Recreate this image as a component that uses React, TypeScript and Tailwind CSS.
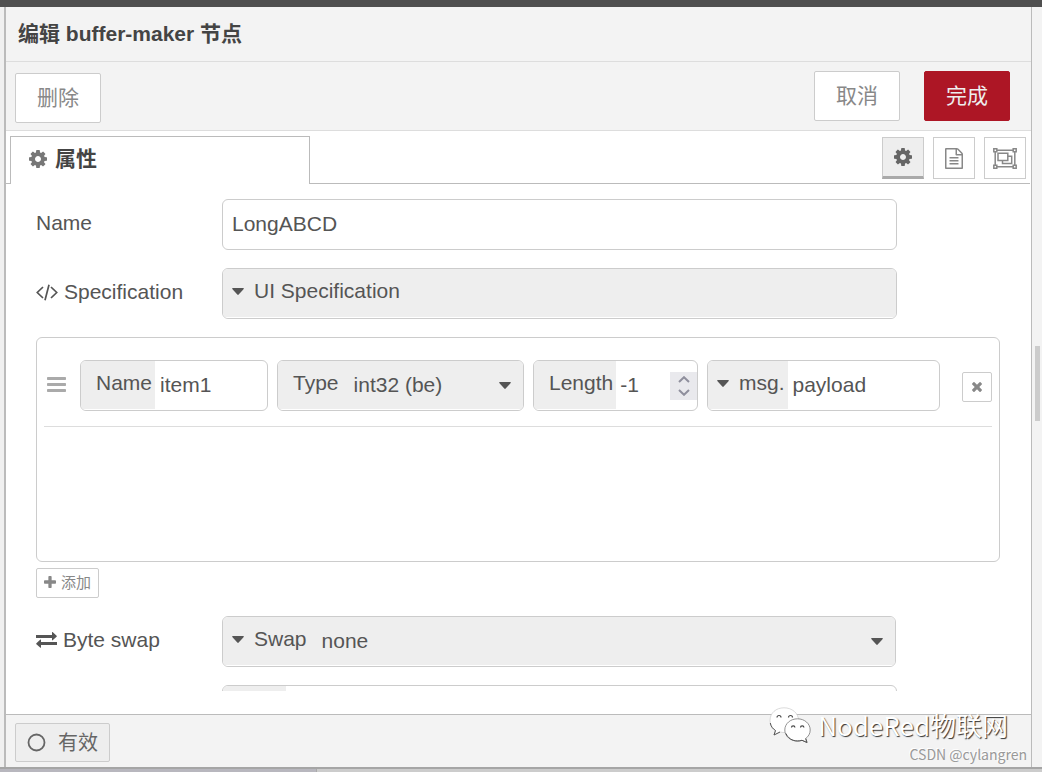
import React, { useState } from 'react';

interface IconProps {
  className?: string;
}

const CogIcon: React.FC<IconProps> = ({ className }) => (
  <svg viewBox="128 128 1536 1536" fill="currentColor" className={className} aria-hidden="true">
    <path d="M1152 896q0-106-75-181t-181-75-181 75-75 181 75 181 181 75 181-75 75-181zm512-109v222q0 12-8 23t-20 13l-185 28q-19 54-39 91 35 50 107 138 10 12 10 25t-9 23q-27 37-99 108t-94 71q-12 0-26-9l-138-108q-44 23-91 38-16 136-29 186-7 28-36 28h-222q-14 0-24.5-8.5t-11.5-21.5l-28-184q-49-16-90-37l-141 107q-10 9-25 9-14 0-25-11-126-114-165-168-7-10-7-23 0-12 8-23 15-21 51-66.5t54-70.5q-27-50-41-99l-183-27q-13-2-21-12.5t-8-23.5v-222q0-12 8-23t19-13l186-28q14-46 39-92-40-57-107-138-10-12-10-24 0-10 9-23 26-36 98.5-107.5t94.5-71.5q13 0 26 10l138 107q44-23 91-38 16-136 29-186 7-28 36-28h222q14 0 24.5 8.5t11.5 21.5l28 184q49 16 90 37l142-107q9-9 24-9 13 0 25 10 129 119 165 170 7 8 7 22 0 12-8 23-15 21-51 66.5t-54 70.5q26 50 41 98l183 28q13 2 21 12.5t8 23.5z" />
  </svg>
);

const FileTextIcon: React.FC<IconProps> = ({ className }) => (
  <svg viewBox="128 0 1536 1792" fill="currentColor" className={className} aria-hidden="true">
    <path d="M1596 380q28 28 48 76t20 88v1152q0 40-28 68t-68 28h-1344q-40 0-68-28t-28-68v-1600q0-40 28-68t68-28h896q40 0 88 20t76 48zm-444-244v376h376q-10-29-22-41l-313-313q-12-12-41-22zm384 1528v-1024h-416q-40 0-68-28t-28-68v-416h-768v1536h1280zm-1024-864q0-14 9-23t23-9h704q14 0 23 9t9 23v64q0 14-9 23t-23 9h-704q-14 0-23-9t-9-23v-64zm736 224q14 0 23 9t9 23v64q0 14-9 23t-23 9h-704q-14 0-23-9t-9-23v-64q0-14 9-23t23-9h704zm0 256q14 0 23 9t9 23v64q0 14-9 23t-23 9h-704q-14 0-23-9t-9-23v-64q0-14 9-23t23-9h704z" />
  </svg>
);

const ObjectGroupIcon: React.FC<IconProps> = ({ className }) => (
  <svg viewBox="0 0 24 21" fill="none" stroke="currentColor" strokeWidth="1.500" className={className} aria-hidden="true">
    <path d="M4 2.200h16M4 18.800h16M2.200 4v13M21.800 4v13" />
    <path d="M.8.8h3v3h-3zM20.200.8h3v3h-3zM.8 17.200h3v3h-3zM20.200 17.200h3v3h-3z" />
    <path d="M5 5.300h9.800v7.200H5zM14.800 8.300h3.900v7.200H9.500v-3" />
  </svg>
);

const PlusIcon: React.FC<IconProps> = ({ className }) => (
  <svg viewBox="192 128 1408 1408" fill="currentColor" className={className} aria-hidden="true">
    <path d="M1600 736v192q0 40-28 68t-68 28h-416v416q0 40-28 68t-68 28h-192q-40 0-68-28t-28-68v-416h-416q-40 0-68-28t-28-68v-192q0-40 28-68t68-28h416v-416q0-40 28-68t68-28h192q40 0 68 28t28 68v416h416q40 0 68 28t28 68z" />
  </svg>
);

const RemoveIcon: React.FC<IconProps> = ({ className }) => (
  <svg viewBox="302 366 1188 1188" fill="currentColor" className={className} aria-hidden="true">
    <path d="M1490 1322q0 40-28 68l-136 136q-28 28-68 28t-68-28l-294-294-294 294q-28 28-68 28t-68-28l-136-136q-28-28-28-68t28-68l294-294-294-294q-28-28-28-68t28-68l136-136q28-28 68-28t68 28l294 294 294-294q28-28 68-28t68 28l136 136q28 28 28 68t-28 68l-294 294 294 294q28 28 28 68z" />
  </svg>
);

const CodeIcon: React.FC<IconProps> = ({ className }) => (
  <svg viewBox="0 0 22 17" fill="none" stroke="currentColor" strokeWidth="1.7" className={className} aria-hidden="true">
    <path d="M7 3 1.300 8.500 7 14M15 3l5.700 5.500L15 14M13 .7 9 16.300" />
  </svg>
);

const ExchangeIcon: React.FC<IconProps> = ({ className }) => (
  <svg viewBox="0 0 21 16" fill="currentColor" className={className} aria-hidden="true">
    <path d="M0 3h16V.4q0-.6.6-.3l4 3.700q.5.500 0 1l-4 3.500q-.6.300-.6-.4V6H0zM21 10H5V7.900q0-.6-.6-.3l-4 3.600q-.5.500 0 1l4 3.500q.6.400.6-.3V13h16z" />
  </svg>
);

const CaretIcon: React.FC<IconProps> = ({ className }) => (
  <svg viewBox="0 0 12 7" fill="currentColor" className={className} aria-hidden="true">
    <path d="M.8 0h10.400q1.200 0 .5 1.100L6.700 6.600q-.7.600-1.400 0L.3 1.100Q-.4 0 .8 0z" />
  </svg>
);

const BarsIcon: React.FC<IconProps> = ({ className }) => (
  <svg viewBox="0 0 19 16" fill="currentColor" className={className} aria-hidden="true">
    <rect width="19" height="3" rx=".7" />
    <rect y="6" width="19" height="3" rx=".7" />
    <rect y="12" width="19" height="3" rx=".7" />
  </svg>
);

const WechatIcon: React.FC<IconProps> = ({ className }) => (
  <svg viewBox="0 0 42 36" className={className} aria-hidden="true">
    <g fill="#fff">
      <path stroke="#ccc" strokeWidth=".7" d="M15 .8C7 .8 1 6 1 13.500c0 4.500 2 7.700 5.500 10L5 28l6-3c8 2 18-1 18.500-11.500C29.500 6 23 .8 15 .8z" />
      <path stroke="#777" strokeWidth=".8" d="M28.500 11.800c-7 0-12.700 4.800-12.700 11.200S21.500 34 28.500 34c1.600 0 3-.2 4.500-.7l5 2.200-1.300-4c2.800-2.100 4.500-5 4.500-8.500 0-6.400-5.700-11.200-12.700-11.200z" />
    </g>
    <path d="M1.300 16c.6 3.300 2.300 5.700 5.200 7.500L5 28l6-3M17 26.500c1.800 4.500 6.200 7.500 11.500 7.500 1.600 0 3-.2 4.500-.7l5 2.200-1.300-4" fill="none" stroke="#555" />
    <g fill="none" stroke="#444" strokeWidth="1.200">
      <path d="M8 10.500a2 2 0 0 1 4 0M19.500 10.500a2 2 0 0 1 4 0M22.500 20.500a1.700 1.700 0 0 1 3.400 0M31.500 20.500a1.700 1.700 0 0 1 3.400 0" />
    </g>
  </svg>
);

const fieldBox = 'flex h-[51px] min-w-0 overflow-hidden rounded-md border border-[#ccc] bg-white';
const typeLabel = 'flex shrink-0 items-center border-b border-white bg-[#eee] pb-1';
const trayButton = 'h-[50px] rounded-xs border px-[21px]';
const tabButton = 'flex size-[42px] items-center justify-center border border-[#ccc] pr-px';

const App: React.FC = () => {
  const [name, setName] = useState('LongABCD');
  const [item, setItem] = useState({ name: 'item1', type: 'int32 (be)', length: '-1', value: 'payload' });
  const [swap, setSwap] = useState('none');

  return (
    <div className="relative flex h-screen flex-col bg-[#f0f0f0] font-['Liberation_Sans','Noto_Sans_CJK_SC',sans-serif] text-[21px] leading-[30px] text-[#555]">
      <div className="h-[7px] shrink-0 bg-[#4f4f4f]" />

      <div className="flex min-h-0 flex-1">
        <div className="w-1 shrink-0" />
        <main className="flex min-w-0 flex-1 flex-col border-r border-l-2 border-r-[#bbb] border-l-[#bbb] bg-white">
          <header className="shrink-0 border-b border-[#ddd] bg-[#f3f3f3] px-3 pt-3 pb-3">
            <h1 className="font-bold text-[#444]">编辑 buffer-maker 节点</h1>
          </header>

          {/* Tray toolbar */}
          <div className="flex shrink-0 items-start border-b border-[#ddd] bg-[#f3f3f3] pt-[9px] pr-[21px] pb-[7px] pl-[9px]">
            <button className={`${trayButton} mt-0.5 border-[#ccc] bg-white text-[#888]`}>删除</button>
            <button className={`${trayButton} ml-auto border-[#ccc] bg-white text-[#888]`}>取消</button>
            <button className={`${trayButton} ml-6 border-[#ad1625] bg-[#ad1625] text-[#eee]`}>完成</button>
          </div>

          {/* Tabs */}
          <div className="flex h-[53px] shrink-0 items-end">
            <div className="w-1 self-stretch border-b border-[#bbb]" />
            <button className="flex h-12 w-[300px] items-center gap-2 border-x border-t border-[#bbb] pb-1 pl-[18px] font-bold text-[#444]">
              <CogIcon className="size-[18px] text-[#777]" />
              属性
            </button>
            <div className="mr-px flex flex-1 justify-end gap-[9px] self-stretch border-b border-[#bbb] pt-1.5 pr-1">
              <button aria-label="属性" className={`${tabButton} border-b-3 border-b-[#aaa] bg-[#eee] text-[#666]`}>
                <CogIcon className="size-[18px]" />
              </button>
              <button aria-label="描述" className={`${tabButton} bg-white text-[#888]`}>
                <FileTextIcon className="h-[21px] w-[18px]" />
              </button>
              <button aria-label="外观" className={`${tabButton} bg-white text-[#888]`}>
                <ObjectGroupIcon className="h-[21px] w-6" />
              </button>
            </div>
          </div>

          {/* Node properties */}
          <form className="mb-[23px] min-h-0 flex-1 overflow-hidden pt-[15px] pr-[31px] pl-[30px]" onSubmit={(e) => e.preventDefault()}>
            <div className="flex">
              <label htmlFor="node-name" className="w-[186px] shrink-0 pt-[9px]">Name</label>
              <input
                id="node-name"
                value={name}
                onChange={(e) => setName(e.target.value)}
                className="mr-[103px] h-[51px] min-w-0 flex-1 rounded-md border border-[#ccc] px-[9px] pb-0.5"
              />
            </div>

            <div className="mt-[18px] flex">
              <label htmlFor="node-spec" className="flex w-[186px] shrink-0 gap-1.5 pt-[9px]">
                <CodeIcon className="mt-[7px] h-[17px] w-[22px]" />
                Specification
              </label>
              <div className={`${fieldBox} mr-[103px] flex-1`}>
                <button id="node-spec" type="button" className={`${typeLabel} flex-1 gap-2.5 pl-[9px]`}>
                  <CaretIcon className="h-[7px] w-3" />
                  UI Specification
                </button>
              </div>
            </div>

            <div className="mt-[18px] h-[225px] rounded-md border border-[#ccc] px-[7px] pt-[22px]">
              <div className="flex items-center border-b border-[#ddd] pb-[15px]">
                <BarsIcon className="mr-3.5 mb-0.5 ml-[3px] h-4 w-[19px] shrink-0 text-[#aaa]" />
                <div className="grid min-w-0 flex-1 grid-cols-[188fr_247fr_165fr_233fr] gap-[9px]">
                  <div className={fieldBox}>
                    <label htmlFor="item-name" className={`${typeLabel} pr-[3px] pl-[15px]`}>Name</label>
                    <input
                      id="item-name"
                      value={item.name}
                      onChange={(e) => setItem({ ...item, name: e.target.value })}
                      className="min-w-0 flex-1 px-[5px] pb-px"
                    />
                  </div>

                  <div className={`${fieldBox} relative`}>
                    <label htmlFor="item-type" className={`${typeLabel} pl-[15px]`}>Type</label>
                    <select
                      id="item-type"
                      value={item.type}
                      onChange={(e) => setItem({ ...item, type: e.target.value })}
                      className="min-w-0 flex-1 appearance-none border-b border-white bg-[#eee] pl-[15px]"
                    >
                      <option>int32 (be)</option>
                    </select>
                    <CaretIcon className="pointer-events-none absolute top-[21px] right-3 h-[7px] w-3" />
                  </div>

                  <div className={fieldBox}>
                    <label htmlFor="item-length" className={`${typeLabel} pr-[3px] pl-[15px]`}>Length</label>
                    <input
                      id="item-length"
                      value={item.length}
                      onChange={(e) => setItem({ ...item, length: e.target.value })}
                      className="min-w-0 flex-1 pb-px pl-1"
                    />
                    <div className="my-auto flex h-7 w-[27px] shrink-0 flex-col items-center justify-center gap-1.5 bg-[#e9e9ed] text-[#8f8f9d]">
                      <button type="button" aria-label="+1">
                        <svg viewBox="0 0 12 7" className="block h-[7px] w-3" fill="none" stroke="currentColor" strokeWidth="2">
                          <path d="m1 6 5-4.800L11 6" />
                        </svg>
                      </button>
                      <button type="button" aria-label="-1">
                        <svg viewBox="0 0 12 7" className="block h-[7px] w-3" fill="none" stroke="currentColor" strokeWidth="2">
                          <path d="m1 1 5 4.800L11 1" />
                        </svg>
                      </button>
                    </div>
                  </div>

                  <div className={fieldBox}>
                    <button type="button" className={`${typeLabel} gap-2.5 pr-[3px] pl-[9px]`}>
                      <CaretIcon className="h-[7px] w-3" />
                      msg.
                    </button>
                    <input
                      aria-label="msg."
                      value={item.value}
                      onChange={(e) => setItem({ ...item, value: e.target.value })}
                      className="min-w-0 flex-1 px-[5px] pb-px"
                    />
                  </div>
                </div>
                <button type="button" aria-label="删除" className="mt-0.5 ml-[22px] flex size-[30px] shrink-0 items-center justify-center rounded-xs border border-[#ccc] text-[#888]">
                  <RemoveIcon className="size-2.5" />
                </button>
              </div>
            </div>

            <button type="button" className="mt-1.5 flex h-[30px] items-center gap-[5px] rounded-xs border border-[#ccc] px-[7px] text-[15px] text-[#888]">
              <PlusIcon className="mb-0.5 size-3" />
              添加
            </button>

            <div className="mt-[18px] flex">
              <label htmlFor="byte-swap" className="flex w-[186px] shrink-0 gap-1.5 pt-[9px]">
                <ExchangeIcon className="mt-[7px] h-4 w-[21px]" />
                Byte swap
              </label>
              <div className={`${fieldBox} relative mr-[104px] flex-1`}>
                <button type="button" className={`${typeLabel} gap-2.5 pl-[9px]`}>
                  <CaretIcon className="h-[7px] w-3" />
                  Swap
                </button>
                <select
                  id="byte-swap"
                  value={swap}
                  onChange={(e) => setSwap(e.target.value)}
                  className="min-w-0 flex-1 appearance-none border-b border-white bg-[#eee] pl-[15px]"
                >
                  <option>none</option>
                </select>
                <CaretIcon className="pointer-events-none absolute top-[21px] right-3 h-[7px] w-3" />
              </div>
            </div>

            <div className="mt-[18px] flex pl-[186px]">
              <div className={`${fieldBox} mr-[103px] flex-1`}>
                <div className="w-[63px] bg-[#eee]" />
              </div>
            </div>
          </form>

          <footer className="shrink-0 border-t border-[#bbb] bg-[#f3f3f3] px-[9px] pt-2 pb-[5px]">
            <button className="flex h-[39px] items-center gap-3 rounded-xs border border-[#ccc] bg-[#eee] px-[11px] text-xl text-[#666]">
              <svg viewBox="0 0 19 19" className="size-[19px]" fill="none" stroke="currentColor" strokeWidth="1.800" aria-hidden="true">
                <circle cx="9.500" cy="9.500" r="8" />
              </svg>
              有效
            </button>
          </footer>
        </main>

        {/* Page scrollbar */}
        <div className="flex w-2.5 shrink-0 flex-col bg-[#f3f3f3] pt-[339px] pl-[3px]">
          <div className="h-[75px] w-[5px] bg-[#ccc]" />
        </div>
      </div>

      <div className="flex h-[5px] shrink-0 border-t-2 border-[#a5a5a5] bg-[#ccc]">
        <div className="w-[317px] border-r border-[#aaa] bg-[#b8b7be]" />
      </div>

      <div className="pointer-events-none absolute right-[15px] bottom-[7px] flex flex-col items-end font-['Noto_Sans_CJK_SC',sans-serif]">
        <div className="mr-[19px] flex items-center gap-[7px] text-[26px] leading-9 text-white [text-shadow:1px_1px_1px_#333]">
          <WechatIcon className="h-9 w-[42px]" />
          NodeRed物联网
        </div>
        <div className="text-sm leading-[22px] text-[#999] [text-shadow:-1px_-1px_0_#fff]">CSDN @cylangren</div>
      </div>
    </div>
  );
};

export default App;
